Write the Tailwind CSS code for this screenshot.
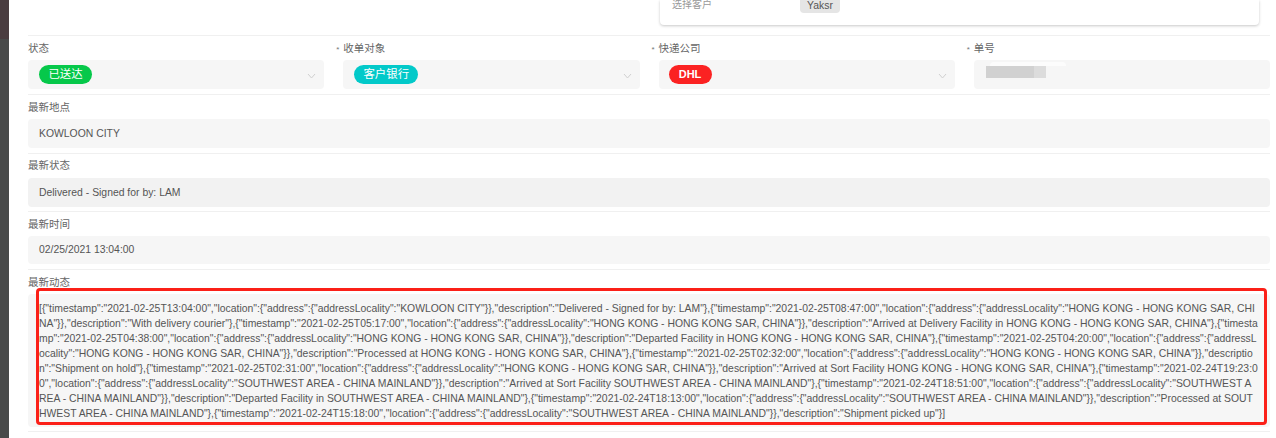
<!DOCTYPE html>
<html lang="zh">
<head>
    <meta charset="UTF-8">
    <title>物流详情</title>
    <script src="https://cdn.jsdelivr.net/npm/@tailwindcss/browser@4"></script>
</head>
<body class="bg-white overflow-hidden font-['Liberation_Sans','Noto_Sans_CJK_SC',sans-serif]">
<div class="flex h-[438px] overflow-hidden">
    <!-- sidebar edge -->
    <div class="w-[9px] shrink-0 flex flex-col">
        <div class="h-[39px] bg-[#4a3d40]"></div>
        <div class="flex-1 bg-[#484a4a]"></div>
    </div>

    <main class="w-[1242px] ml-[19px] shrink-0">
        <!-- customer card, cut off by the top of the page -->
        <div class="h-[35px] pl-[632px] pr-[11px]">
            <div class="h-[25px] bg-white rounded-b shadow-[0_1px_3px_rgba(0,0,0,0.22)] pl-[12px] flex items-start gap-[88px]">
                <span class="text-[10px] leading-[10px] text-[#999]">选择客户</span>
                <span class="h-[13px] w-[40px] bg-[#e5e5e5] rounded-b-sm text-[10.4px] leading-[11px] text-[#555] text-center">Yaksr</span>
            </div>
        </div>

        <!-- status row -->
        <div class="h-[59px] border-t-[1px] border-[#f0f0f0] grid grid-cols-4 gap-x-[19px]">
            <div>
                <div class="h-[24px] pt-[6px] text-[10.5px] leading-[12px] text-[#666]">状态</div>
                <div class="h-[29px] bg-[#f6f6f6] rounded flex items-center justify-between pl-[11px] pr-[8px]">
                    <span class="h-[19px] w-[53px] rounded-full bg-[#06c84a] text-white text-[11.4px] leading-[19px] text-center">已送达</span>
                    <svg class="mt-[2px]" width="9" height="6" viewBox="0 0 9 6" fill="none" stroke="#d0d0d0"><path d="M1 1l3.5 4L8 1"/></svg>
                </div>
            </div>
            <div>
                <div class="h-[24px] pt-[6px] text-[10.5px] leading-[12px] text-[#666] flex"><span class="w-[7px] -ml-[7px] text-[8px] text-[#777] pt-[2px]">*</span>收单对象</div>
                <div class="h-[29px] bg-[#f6f6f6] rounded flex items-center justify-between pl-[11px] pr-[8px]">
                    <span class="h-[19px] w-[64px] rounded-full bg-[#02c9c9] text-white text-[11.4px] leading-[19px] text-center">客户银行</span>
                    <svg class="mt-[2px]" width="9" height="6" viewBox="0 0 9 6" fill="none" stroke="#d0d0d0"><path d="M1 1l3.5 4L8 1"/></svg>
                </div>
            </div>
            <div>
                <div class="h-[24px] pt-[6px] text-[10.5px] leading-[12px] text-[#666] flex"><span class="w-[7px] -ml-[7px] text-[8px] text-[#777] pt-[2px]">*</span>快递公司</div>
                <div class="h-[29px] bg-[#f6f6f6] rounded flex items-center justify-between pl-[10px] pr-[8px]">
                    <span class="h-[19px] w-[43px] rounded-full bg-[#fb2222] text-white font-bold text-[11px] leading-[19px] text-center">DHL</span>
                    <svg class="mt-[2px]" width="9" height="6" viewBox="0 0 9 6" fill="none" stroke="#d0d0d0"><path d="M1 1l3.5 4L8 1"/></svg>
                </div>
            </div>
            <div>
                <div class="h-[24px] pt-[6px] text-[10.5px] leading-[12px] text-[#666] flex"><span class="w-[7px] -ml-[7px] text-[8px] text-[#777] pt-[2px]">*</span>单号</div>
                <div class="relative h-[29px] bg-[#f6f6f6] rounded pl-[12px] pt-[6px] flex">
                    <div class="h-[12px] w-[48px] bg-[#d1d1d1]"></div>
                    <div class="h-[12px] w-[12px] bg-[#dcdcdc]"></div>
                    <!-- smudge left by the redaction -->
                    <div class="absolute left-[16px] top-[2px] w-[76px] h-[4px] bg-white/70 rounded-t-full"></div>
                </div>
            </div>
        </div>

        <div class="h-[59px] border-t-[1px] border-[#f0f0f0]">
            <div class="h-[24px] pt-[6px] text-[10.5px] leading-[12px] text-[#666]">最新地点</div>
            <div class="h-[29px] bg-[#f6f6f6] rounded pl-[11px] text-[10.4px] leading-[29px] text-[#555]">KOWLOON CITY</div>
        </div>
        <div class="h-[58px] border-t-[1px] border-[#f0f0f0]">
            <div class="h-[24px] pt-[5px] text-[10.5px] leading-[12px] text-[#666]">最新状态</div>
            <div class="h-[29px] bg-[#f2f2f2] rounded pl-[11px] text-[10.4px] leading-[29px] text-[#555]">Delivered - Signed for by: LAM</div>
        </div>
        <div class="h-[58px] border-t-[1px] border-[#f0f0f0]">
            <div class="h-[24px] pt-[6px] text-[10.5px] leading-[12px] text-[#666]">最新时间</div>
            <div class="h-[28px] bg-[#f6f6f6] rounded pl-[11px] text-[10.4px] leading-[28px] text-[#555]">02/25/2021 13:04:00</div>
        </div>

        <!-- raw tracking events -->
        <div class="h-[163px] border-t-[1px] border-[#f0f0f0] border-b-[1px]">
            <div class="h-[24px] pt-[6px] text-[10.5px] leading-[12px] text-[#666]">最新动态</div>
            <div class="relative h-[133px] bg-[#f6f6f6] rounded pl-[11px] pt-[7px] text-[10.4px] leading-[15px] text-[#555] whitespace-nowrap">
                [{"timestamp":"2021-02-25T13:04:00","location":{"address":{"addressLocality":"KOWLOON CITY"}},"description":"Delivered - Signed for by: LAM"},{"timestamp":"2021-02-25T08:47:00","location":{"address":{"addressLocality":"HONG KONG - HONG KONG SAR, CHI<br>
                NA"}},"description":"With delivery courier"},{"timestamp":"2021-02-25T05:17:00","location":{"address":{"addressLocality":"HONG KONG - HONG KONG SAR, CHINA"}},"description":"Arrived at Delivery Facility in HONG KONG - HONG KONG SAR, CHINA"},{"timesta<br>
                mp":"2021-02-25T04:38:00","location":{"address":{"addressLocality":"HONG KONG - HONG KONG SAR, CHINA"}},"description":"Departed Facility in HONG KONG - HONG KONG SAR, CHINA"},{"timestamp":"2021-02-25T04:20:00","location":{"address":{"addressL<br>
                ocality":"HONG KONG - HONG KONG SAR, CHINA"}},"description":"Processed at HONG KONG - HONG KONG SAR, CHINA"},{"timestamp":"2021-02-25T02:32:00","location":{"address":{"addressLocality":"HONG KONG - HONG KONG SAR, CHINA"}},"descriptio<br>
                n":"Shipment on hold"},{"timestamp":"2021-02-25T02:31:00","location":{"address":{"addressLocality":"HONG KONG - HONG KONG SAR, CHINA"}},"description":"Arrived at Sort Facility HONG KONG - HONG KONG SAR, CHINA"},{"timestamp":"2021-02-24T19:23:0<br>
                0","location":{"address":{"addressLocality":"SOUTHWEST AREA - CHINA MAINLAND"}},"description":"Arrived at Sort Facility SOUTHWEST AREA - CHINA MAINLAND"},{"timestamp":"2021-02-24T18:51:00","location":{"address":{"addressLocality":"SOUTHWEST A<br>
                REA - CHINA MAINLAND"}},"description":"Departed Facility in SOUTHWEST AREA - CHINA MAINLAND"},{"timestamp":"2021-02-24T18:13:00","location":{"address":{"addressLocality":"SOUTHWEST AREA - CHINA MAINLAND"}},"description":"Processed at SOUT<br>
                HWEST AREA - CHINA MAINLAND"},{"timestamp":"2021-02-24T15:18:00","location":{"address":{"addressLocality":"SOUTHWEST AREA - CHINA MAINLAND"}},"description":"Shipment picked up"}]
                <!-- red annotation frame -->
                <div class="absolute left-[8px] top-[-6px] w-[1231px] h-[137px] border-[3px] border-[#fb2018] rounded-sm"></div>
            </div>
        </div>
    </main>
</div>
</body>
</html>
